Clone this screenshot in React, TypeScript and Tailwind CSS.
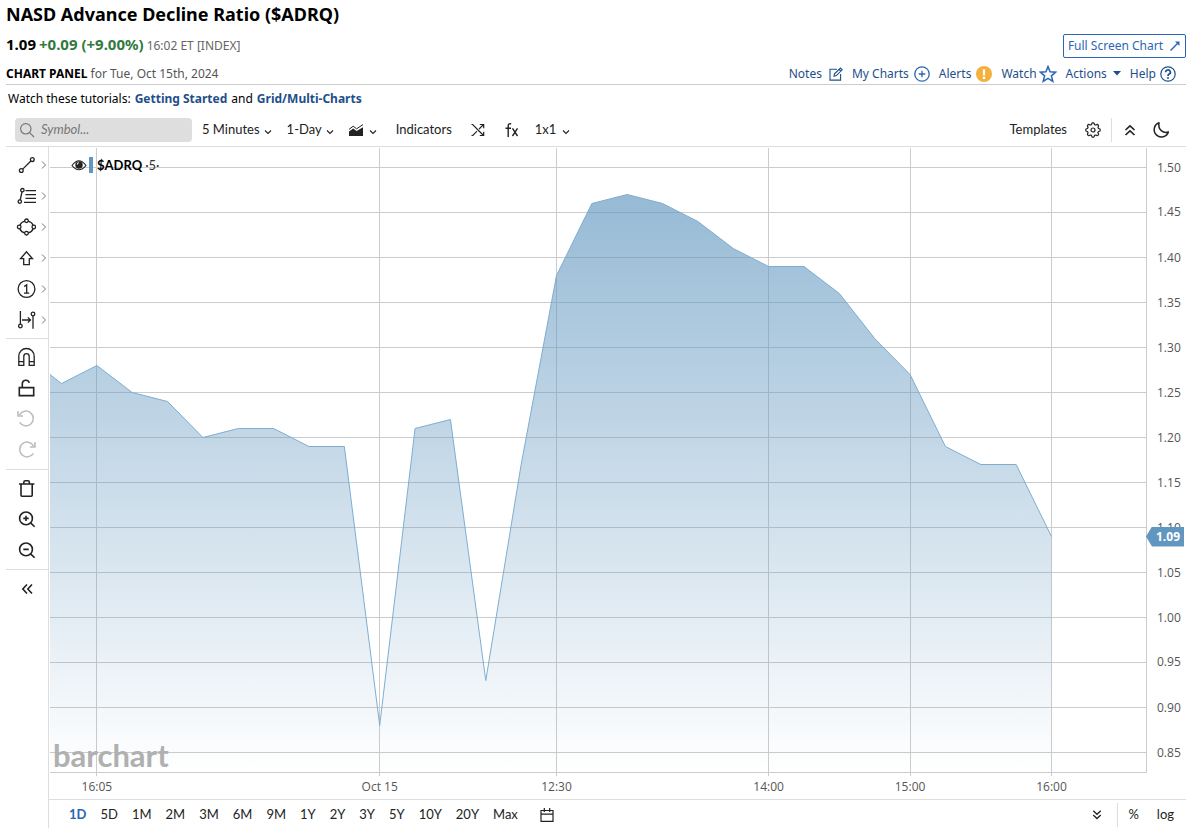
import type { ReactNode } from "react";

const VALUES = [
  1.26, 1.28, 1.25, 1.24, 1.2, 1.21, 1.21, 1.19, 1.19, 0.88, 1.21, 1.22, 0.93, 1.17, 1.38, 1.46, 1.47, 1.46, 1.44,
  1.41, 1.39, 1.39, 1.36, 1.31, 1.27, 1.19, 1.17, 1.17, 1.09,
];

const PLOT_W = 1098;
const PLOT_H = 630;
const BASE_Y = 625.5;
const AXIS_X = 1097.5;

const yOf = (v: number) => 20.5 + (1.5 - v) * 900;
const xOf = (i: number) => 12.5 + i * 35.357;

const LEVELS = ["1.50", "1.45", "1.40", "1.35", "1.30", "1.25", "1.20", "1.15", "1.10", "1.05", "1.00", "0.95", "0.90", "0.85"];

const TIMES = [
  { index: 1, label: "16:05" },
  { index: 9, label: "Oct 15" },
  { index: 14, label: "12:30" },
  { index: 20, label: "14:00" },
  { index: 24, label: "15:00" },
  { index: 28, label: "16:00" },
];

const RANGES = ["1D", "5D", "1M", "2M", "3M", "6M", "9M", "1Y", "2Y", "3Y", "5Y", "10Y", "20Y", "Max"];

const linePoints = [`1,${yOf(1.27)}`, ...VALUES.map((v, i) => `${xOf(i)},${yOf(v)}`)].join(" ");
const areaPoints = `1,${BASE_Y} ${linePoints} ${xOf(VALUES.length - 1)},${BASE_Y}`;

// Gear outline: a circle whose radius swells eight times.
const gearPoints = Array.from({ length: 96 }, (_, i) => {
  const a = (i / 96) * Math.PI * 2;
  const r = 6.4 + 0.85 * Math.tanh(2 * Math.cos(8 * a));
  return `${(8 + r * Math.cos(a)).toFixed(2)},${(8 + r * Math.sin(a)).toFixed(2)}`;
}).join(" ");

function Icon({ className, box = "0 0 20 20", width = 1.3, children }: { className: string; box?: string; width?: number; children: ReactNode }) {
  return (
    <svg viewBox={box} className={`shrink-0 ${className}`} fill="none" stroke="currentColor" strokeWidth={width} aria-hidden="true">
      {children}
    </svg>
  );
}

function ChevronDown() {
  return (
    <Icon className="mt-1 h-2 w-2" box="0 0 8 8" width={1.1}>
      <path d="M1 2.5l3 3 3-3" />
    </Icon>
  );
}

function DoubleChevron({ className }: { className: string }) {
  return (
    <Icon className={className} box="0 0 12 12" width={1.6}>
      <path d="M1.5 6L6 1.8 10.5 6M1.5 11L6 6.8 10.5 11" />
    </Icon>
  );
}

const DRAW_TOOLS: { label: string; art: ReactNode }[] = [
  {
    label: "Line tools",
    art: (
      <>
        <circle cx="5.3" cy="15.5" r="1.9" />
        <circle cx="16.3" cy="4.6" r="1.9" />
        <path d="M6.7 14.1l8.2-8.1" />
      </>
    ),
  },
  {
    label: "Fibonacci tools",
    art: (
      <>
        <circle cx="6.4" cy="4.2" r="1.7" />
        <circle cx="3.8" cy="15.6" r="1.7" />
        <path d="M6 6l-1.8 8M9.5 4.7H20M9.5 8.6H20M9.5 12.4H20M8 16.3h12" />
      </>
    ),
  },
  {
    label: "Shape tools",
    art: (
      <>
        <path d="M8.8 4.1a7.2 6.2 0 0 0-4.9 4.2M12.2 4.1a7.2 6.2 0 0 1 4.9 4.2M8.8 15.9a7.2 6.2 0 0 1-4.9-4.2M12.2 15.9a7.2 6.2 0 0 0 4.9-4.2" />
        <circle cx="10.5" cy="3.8" r="1.8" />
        <circle cx="10.5" cy="16.2" r="1.8" />
        <circle cx="3.2" cy="10" r="1.8" />
        <circle cx="17.8" cy="10" r="1.8" />
      </>
    ),
  },
  { label: "Arrow tools", art: <path d="M10.5 3.8l-6 6.9h3.2v6h5.6v-6h3.2z" /> },
  {
    label: "Count tools",
    art: (
      <>
        <circle cx="10.5" cy="10" r="8.4" />
        <path d="M8.2 7.6l2.5-1.8v8.2M8 14.1h5.2" />
      </>
    ),
  },
  {
    label: "Measure tools",
    art: (
      <>
        <circle cx="4.4" cy="16" r="1.8" />
        <circle cx="17" cy="4" r="1.8" />
        <path d="M4.4 1v13.2M17 5.8v13M6 10h8.4M11.8 7.4l2.7 2.6-2.7 2.6" />
      </>
    ),
  },
];

const EDIT_TOOLS: { label: string; art: ReactNode; faded?: boolean }[] = [
  {
    label: "Magnet",
    art: <path d="M2.8 18.4V9.2a7.7 7.7 0 0 1 15.4 0v9.2h-5V9.4a2.7 2.7 0 0 0-5.4 0v9zM2.8 14.6h5M13.2 14.6h5" />,
  },
  {
    label: "Lock drawings",
    art: <path d="M3.3 9.6h14.4v8H3.3zM6.3 9.6V5.7a3.6 3.6 0 0 1 7-1" strokeWidth="1.6" />,
  },
  {
    label: "Undo",
    faded: true,
    art: <path d="M3.4 5.9A7.4 7.4 0 1 1 3.6 13.4M2 2v4.9h5" strokeWidth="1.5" />,
  },
  {
    label: "Redo",
    faded: true,
    art: <path d="M17.6 5.9A7.4 7.4 0 1 0 17.4 13.4M19 2v4.9h-5" strokeWidth="1.5" />,
  },
];

const VIEW_TOOLS: { label: string; art: ReactNode; faded?: boolean }[] = [
  {
    label: "Delete",
    art: <path d="M3 6h15.4M5 6v11.2q0 1 1 1h9.2q1 0 1-1V6M7.8 6V4.4q0-1.6 1.6-1.6h2.4q1.6 0 1.6 1.6V6" strokeWidth="1.6" />,
  },
  {
    label: "Zoom in",
    art: (
      <g strokeWidth="1.6">
        <circle cx="10" cy="9.4" r="6.4" />
        <path d="M14.6 13.9l4 3.9M7.3 9.4h5.4M10 6.7v5.4" />
      </g>
    ),
  },
  {
    label: "Zoom out",
    art: (
      <g strokeWidth="1.6">
        <circle cx="10" cy="9.4" r="6.4" />
        <path d="M14.6 13.9l4 3.9M7.3 9.4h5.4" />
      </g>
    ),
  },
];

function SideButton({ label, art, faded, more }: { label: string; art: ReactNode; faded?: boolean; more?: boolean }) {
  return (
    <button type="button" aria-label={label} className={`flex h-[31px] w-full items-center pl-2.5 ${faded ? "text-[#bcbcbc]" : "text-[#222]"}`}>
      <Icon className="h-5 w-5">{art}</Icon>
      {more && (
        <Icon className="ml-1 h-2.5 w-2 text-[#777]" box="0 0 8 10" width={1}>
          <path d="M2 1.5L5.5 5 2 8.5" />
        </Icon>
      )}
    </button>
  );
}

function Header() {
  const link = "flex items-center text-[#1e4f8a]";
  return (
    <header className="border-b border-[#ccc] font-['Noto_Sans','Open_Sans',sans-serif]">
      <h1 className="h-[30px] text-lg leading-7 font-bold text-black">NASD Advance Decline Ratio ($ADRQ)</h1>
      <div className="flex h-8 items-center justify-between">
        <p className="flex items-baseline gap-[3px] pb-1">
          <strong className="text-[15px] text-black">1.09</strong>
          <strong className="text-[15px] text-[#317a40]">+0.09 (+9.00%)</strong>
          <span className="text-xs text-[#666]">16:02 ET [INDEX]</span>
        </p>
        <a href="#full" className="flex h-6 items-center gap-1.5 rounded-xs border border-[#2a66b5] px-1 text-xs text-[#2a66b5]">
          Full Screen Chart
          <Icon className="h-3 w-3" box="0 0 12 12" width={1.5}>
            <path d="M1.5 10.5l7-7" />
            <path d="M6 1.5h4.5V6z" fill="currentColor" stroke="none" />
          </Icon>
        </a>
      </div>
      <div className="flex h-[22px] items-center justify-between pt-0.5">
        <p className="text-xs text-[#555]">
          <strong className="text-black">CHART PANEL</strong> for Tue, Oct 15th, 2024
        </p>
        <nav className="flex items-center gap-[9px] pr-2.5 text-xs">
          <a href="#notes" className={`${link} gap-[7px]`}>
            Notes
            <Icon className="h-3.5 w-3.5" box="0 0 14 14" width={1.1}>
              <path d="M8 2.2H1v10.9h10.6V7M5 9.2l.5-2.4L11.4 1l1.8 1.8-5.9 5.8zM10 2.4l1.8 1.8" />
            </Icon>
          </a>
          <a href="#charts" className={`${link} gap-[5px]`}>
            My Charts
            <Icon className="h-4 w-4 text-[#2a66b5]" box="0 0 16 16" width={1.3}>
              <circle cx="8" cy="8" r="7.2" />
              <path d="M8 4.7v6.6M4.7 8h6.6" />
            </Icon>
          </a>
          <a href="#alerts" className={`${link} gap-[5px]`}>
            Alerts
            <Icon className="h-4 w-4" box="0 0 16 16">
              <circle cx="8" cy="8" r="8" fill="#f3b03e" stroke="none" />
              <path d="M8 3.2v6.2" stroke="#fff" strokeWidth="2.2" />
              <circle cx="8" cy="11.9" r="1.3" fill="#fff" stroke="none" />
            </Icon>
          </a>
          <a href="#watch" className={`${link} gap-0.5`}>
            Watch
            <Icon className="h-[18px] w-[18px] text-[#2a66b5]" box="0 0 18 18" width={1.5}>
              <path d="M9 1.6l2.1 5.2 5.6.4-4.3 3.6 1.4 5.5L9 13.3l-4.8 3 1.4-5.5-4.3-3.6 5.6-.4z" />
            </Icon>
          </a>
          <a href="#actions" className={`${link} gap-1.5`}>
            Actions
            <Icon className="h-2 w-2" box="0 0 8 8">
              <path d="M0 1h8L4 5.6z" fill="currentColor" stroke="none" />
            </Icon>
          </a>
          <a href="#help" className={`${link} gap-1`}>
            Help
            <Icon className="h-4 w-4" box="0 0 16 16" width={1.2}>
              <circle cx="8" cy="8" r="7.2" />
              <path d="M5.6 6.2a2.4 2.2 0 1 1 3.6 1.9Q8 8.8 8 9.9" strokeWidth="1.7" />
              <circle cx="8" cy="12" r="1" fill="currentColor" stroke="none" />
            </Icon>
          </a>
        </nav>
      </div>
    </header>
  );
}

function Toolbar() {
  const item = "flex items-center gap-1";
  return (
    <div className="flex h-[35px] items-center justify-between border-b border-[#ddd] pt-0.5 text-[13px] text-[#222]">
      <div className="flex items-center">
        <label className="ml-[9px] flex h-6 w-[177px] items-center gap-1.5 rounded bg-[#dedede] px-1 text-[#777]">
          <Icon className="h-4 w-4" box="0 0 16 16" width={1.2}>
            <circle cx="6.8" cy="6.8" r="5.2" />
            <path d="M10.6 10.6l4.4 4.4" />
          </Icon>
          <input aria-label="Symbol" placeholder="Symbol..." className="w-full min-w-0 bg-transparent italic outline-none placeholder:text-[#777]" />
        </label>
        <div className="ml-2.5 flex items-center gap-[15px]">
          <button type="button" className={item}>5 Minutes <ChevronDown /></button>
          <button type="button" className={item}>1-Day <ChevronDown /></button>
          <button type="button" aria-label="Chart type" className="flex items-center gap-1.5">
            <Icon className="h-3.5 w-3.5" box="0 0 14 14" width={1}>
              <path d="M0 13V8.6l4.2-3 3.4 2.4L14 4.2V13z" fill="currentColor" stroke="none" />
              <path d="M0 6.4l4.2-3.2L7.6 5.8 14 1.6" />
            </Icon>
            <ChevronDown />
          </button>
          <button type="button" className="ml-1">Indicators</button>
          <button type="button" aria-label="Compare" className="ml-1">
            <Icon className="h-3.5 w-3.5" box="0 0 14 14" width={1.2}>
              <path d="M.5 1.5h1.2L12 12M.5 12.5h1.3L6 8.2M8 6.2L12 2M8.8 1.5h3.9v3.7M8.8 12.5h3.9V8.8" />
            </Icon>
          </button>
          <button type="button" aria-label="Functions" className="ml-1">
            <Icon className="h-4 w-4" box="0 0 16 16" width={1.4}>
              <path d="M7.2 1.9Q4.2 1 4.2 4.3V15M1.5 6.2h5.5M8.5 6.3l5 7.7M13.5 6.3l-5 7.7" />
            </Icon>
          </button>
          <button type="button" className="flex items-center gap-1.5">1x1 <ChevronDown /></button>
        </div>
      </div>
      <div className="flex items-center pr-4">
        <button type="button">Templates</button>
        <button type="button" aria-label="Settings" className="ml-[18px]">
          <Icon className="h-4 w-4" box="0 0 16 16" width={1.2}>
            <polygon points={gearPoints} strokeLinejoin="round" />
            <circle cx="8" cy="8" r="2" />
          </Icon>
        </button>
        <span className="mr-3 ml-2.5 h-6 w-px bg-[#ddd]" />
        <button type="button" aria-label="Collapse header"><DoubleChevron className="h-3 w-3" /></button>
        <button type="button" aria-label="Dark mode" className="ml-4">
          <Icon className="h-[18px] w-[18px]" box="0 0 18 18" width={1.5}>
            <path d="M7 1.8A7.3 7.3 0 1 0 16.4 11Q12.5 12.5 9.3 9.6T7 1.8z" strokeLinejoin="round" />
          </Icon>
        </button>
      </div>
    </div>
  );
}

function Sidebar() {
  return (
    <aside className="w-[43px] shrink-0 border-r border-[#ddd]">
      <div className="border-b border-[#ddd] pt-0.5 pb-[3px]">
        {DRAW_TOOLS.map((t) => <SideButton key={t.label} {...t} more />)}
      </div>
      <div className="border-b border-[#ddd] pt-0.5 pb-1">
        {EDIT_TOOLS.map((t) => <SideButton key={t.label} {...t} />)}
      </div>
      <div className="border-b border-[#ddd] pt-0.5 pb-1">
        {VIEW_TOOLS.map((t) => <SideButton key={t.label} {...t} />)}
      </div>
      <button type="button" aria-label="Hide tools" className="flex h-[37px] w-full items-center justify-center text-[#222]">
        <DoubleChevron className="h-3 w-3 -rotate-90" />
      </button>
    </aside>
  );
}

function Plot() {
  return (
    <div className="flex min-h-[400px] flex-1 font-['Open_Sans','Noto_Sans',sans-serif] text-xs text-[#555]">
      <div className="relative flex-1">
        <svg viewBox={`0 0 ${PLOT_W} ${PLOT_H}`} preserveAspectRatio="none" className="absolute inset-0 h-full w-full" role="img" aria-label="Price chart">
          <defs>
            <linearGradient id="area" gradientUnits="userSpaceOnUse" x1="0" y1={yOf(1.47)} x2="0" y2={BASE_Y}>
              <stop offset="0" stopColor="#6096bf" stopOpacity="0.66" />
              <stop offset="1" stopColor="#6096bf" stopOpacity="0" />
            </linearGradient>
          </defs>
          <g stroke="#ccc" shapeRendering="crispEdges">
            {LEVELS.map((l) => <line key={l} x1="1" x2={AXIS_X} y1={yOf(Number(l))} y2={yOf(Number(l))} />)}
            {TIMES.map((t) => <line key={t.label} x1={xOf(t.index)} x2={xOf(t.index)} y1="1" y2="629" />)}
            <line x1="1" x2={AXIS_X} y1={BASE_Y} y2={BASE_Y} />
            <line x1={AXIS_X} x2={AXIS_X} y1="1" y2={BASE_Y} />
          </g>
          <polygon points={areaPoints} fill="url(#area)" />
          <polyline points={linePoints} fill="none" stroke="#7fadd0" strokeWidth="1" />
        </svg>
        <div className="absolute top-2.5 left-[22px] flex items-center font-['Lato',sans-serif] text-[13px] leading-4 text-black">
          <Icon className="h-4 w-4 text-[#222]" box="0 0 16 16" width={1.1}>
            <path d="M1 8.5Q4.5 3.7 8 3.7T15 8.5Q11.5 12.8 8 12.8T1 8.5z" />
            <circle cx="8" cy="8" r="3.7" fill="currentColor" stroke="none" />
            <path d="M6.2 7.5q.3-1.6 1.7-1.7" stroke="#fff" />
          </Icon>
          <span className="mr-1 ml-0.5 h-4 w-1 bg-[#6096bf]" />
          <strong>$ADRQ</strong>
          <span className="ml-[3px] text-[#333]">·5·</span>
        </div>
        <span className="absolute bottom-0.5 left-1 font-['Lato',sans-serif] text-[31px] leading-10 font-bold text-[#b0b0b0]">barchart</span>
      </div>
      <div className="relative w-[39px] shrink-0">
        {LEVELS.map((l) => (
          <span key={l} className="absolute left-2.5 -translate-y-1/2" style={{ top: `${(yOf(Number(l)) / PLOT_H) * 100}%` }}>
            {l}
          </span>
        ))}
        <strong
          className="absolute right-0.5 -left-px flex h-5 -translate-y-1/2 items-center bg-[#6096bf] pl-2.5 text-white [clip-path:polygon(6px_0,100%_0,100%_100%,6px_100%,0_50%)]"
          style={{ top: `${(yOf(1.09) / PLOT_H) * 100}%` }}
        >
          1.09
        </strong>
      </div>
    </div>
  );
}

function TimeAxis() {
  return (
    <div className="mr-[39px] h-[22px] font-['Open_Sans','Noto_Sans',sans-serif] text-xs text-[#555]">
      <div className="relative h-full">
        {TIMES.map((t) => (
          <span key={t.label} className="absolute top-0.5 -translate-x-1/2 whitespace-nowrap" style={{ left: `${(xOf(t.index) / PLOT_W) * 100}%` }}>
            {t.label}
          </span>
        ))}
      </div>
    </div>
  );
}

function RangeBar() {
  return (
    <div className="flex h-[29px] items-center justify-between border-t border-[#ddd] pt-0.5 pl-5 text-[13px] text-[#222]">
      <div className="flex items-center gap-3.5">
        {RANGES.map((r) => (
          <button key={r} type="button" className={r === "1D" ? "font-bold text-[#2a66b5]" : ""}>
            {r}
          </button>
        ))}
        <button type="button" aria-label="Pick dates" className="ml-2">
          <Icon className="h-3.5 w-3.5" box="0 0 14 14" width={1.2}>
            <path d="M1 2.5h12v10.8H1zM1 6.2h12M4.3 0v4M9.7 0v4" />
          </Icon>
        </button>
      </div>
      <div className="flex items-center pr-3">
        <button type="button" aria-label="Expand panel"><DoubleChevron className="h-2.5 w-2.5 rotate-180" /></button>
        <span className="mr-2.5 ml-[15px] h-6 w-px bg-[#ddd]" />
        <button type="button">%</button>
        <button type="button" className="ml-[18px]">log</button>
      </div>
    </div>
  );
}

export default function App() {
  return (
    <main className="flex min-h-screen flex-col bg-white pr-3.5 pb-1.5 pl-1.5 font-['Lato',sans-serif]">
      <Header />
      <p className="flex h-[27px] items-center gap-1 pl-0.5 font-['Noto_Sans','Open_Sans',sans-serif] text-xs text-black">
        Watch these tutorials:
        <a href="#start" className="font-bold text-[#1e4f8a]">Getting Started</a>
        and
        <a href="#grid" className="font-bold text-[#1e4f8a]">Grid/Multi-Charts</a>
      </p>
      <Toolbar />
      <div className="flex flex-1">
        <Sidebar />
        <section className="flex min-w-0 flex-1 flex-col">
          <Plot />
          <TimeAxis />
          <RangeBar />
        </section>
      </div>
    </main>
  );
}
